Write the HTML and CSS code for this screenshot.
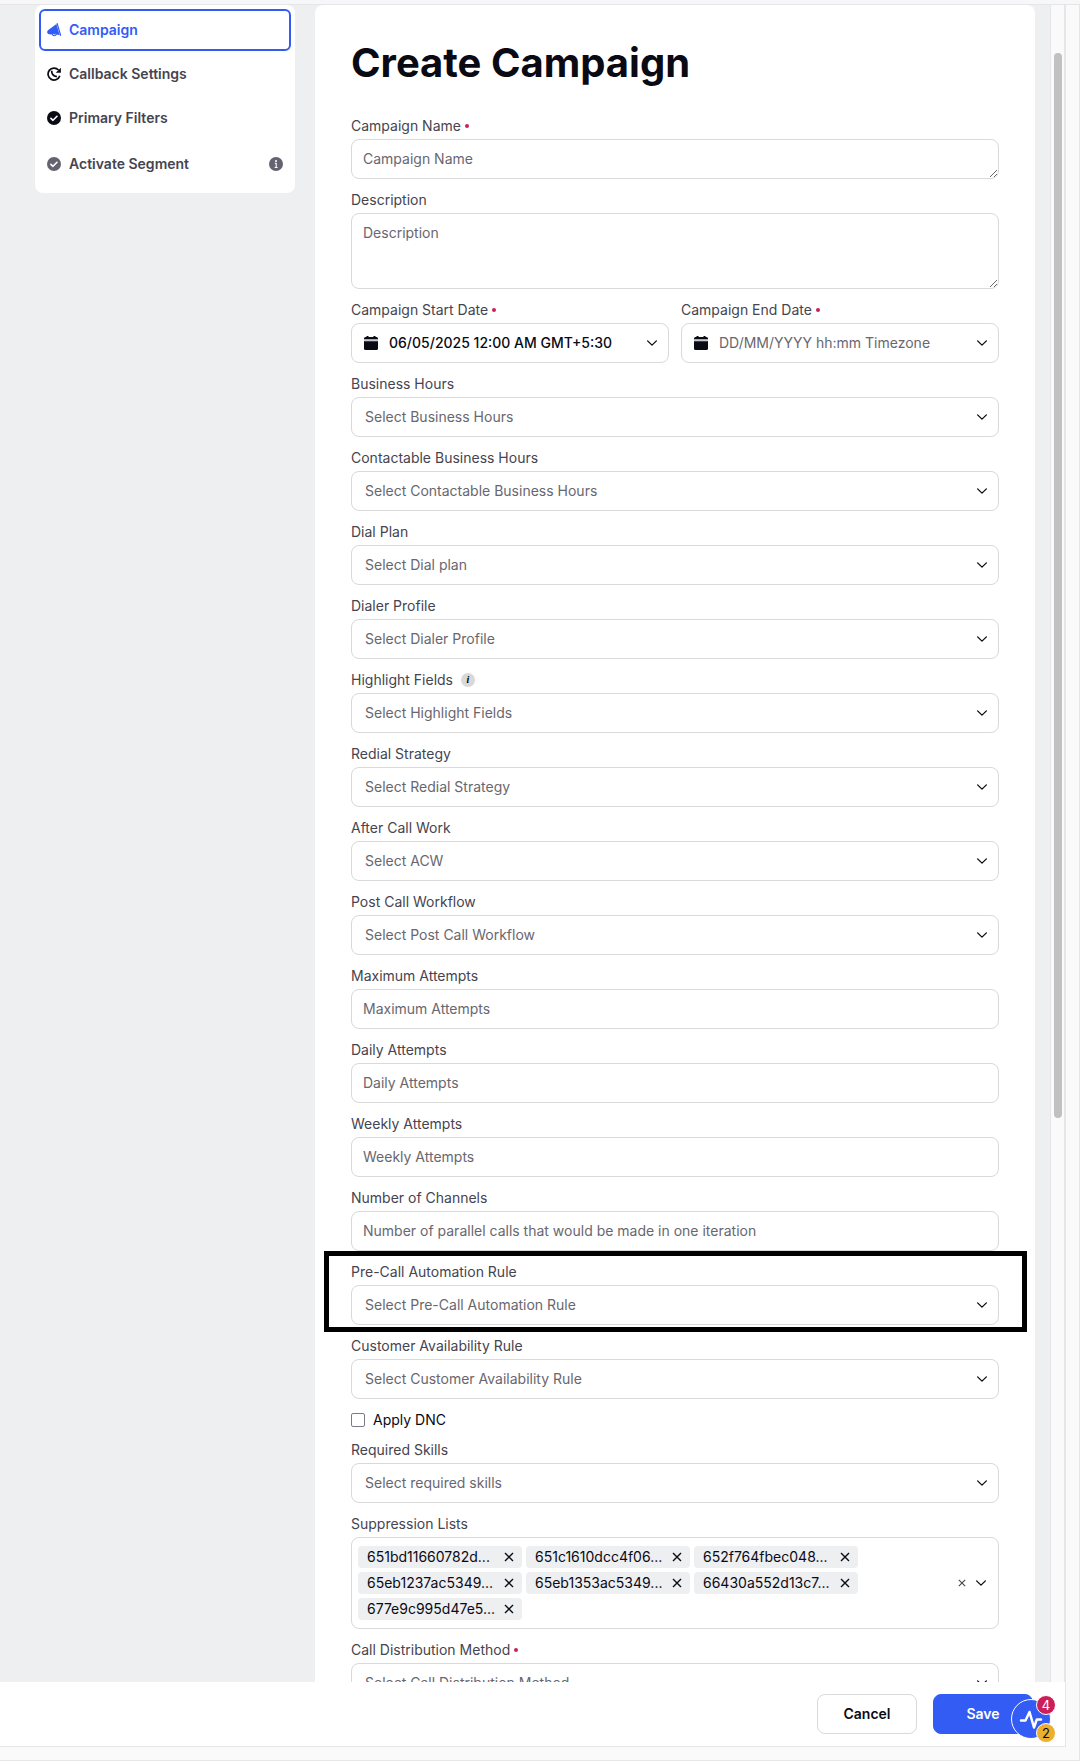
FILE: index.html
```html
<!DOCTYPE html>
<html lang="en">
<head>
<meta charset="utf-8">
<meta name="viewport" content="width=device-width, initial-scale=1">
<title>Create Campaign</title>
<link rel="stylesheet" href="styles.css">
</head>
<body>
<svg class="sprite" aria-hidden="true">
  <symbol id="chevron" viewBox="0 0 12 12"><path d="M1.600 3.900 6 8.100l4.400-4.200" fill="none" stroke="currentColor" stroke-width="1.300" stroke-linecap="round" stroke-linejoin="round"/></symbol>
  <symbol id="cross" viewBox="0 0 8 8"><path d="M.8.8l6.400 6.400M7.200.8.8 7.200" fill="none" stroke="currentColor" stroke-width="1.100"/></symbol>
  <symbol id="check" viewBox="0 0 14 14"><circle cx="7" cy="7" r="7" fill="currentColor"/><path d="M3.900 7.300l2.100 2 4-4" fill="none" stroke="#fff" stroke-width="1.600" stroke-linecap="round" stroke-linejoin="round"/></symbol>
  <symbol id="calendar" viewBox="0 0 14 14"><path d="M2.500 0h2v1h5V0h2v1h.9Q14 1 14 2.600V3.500H0V2.600Q0 1 1.600 1h.9z" fill="currentColor"/><path d="M0 3.500h14v2H0z" fill="#c9cbce"/><path d="M0 5.200h14v7.200q0 1.600-1.600 1.600H1.600Q0 14 0 12.400z" fill="currentColor"/></symbol>
</svg>
<header class="topbar"></header>
<div class="frame">
  <div class="app">
    <div class="workspace">
      <nav class="steps" aria-label="Campaign steps">
        <a class="step step-current" href="#campaign" aria-current="step">
          <svg class="icon" viewBox="0 0 14 14" aria-hidden="true"><path d="M9.400.9 12.700 12.300 9.900 11.500Q9.200 13.500 7 13.300 5.200 13 4.900 11.500L2 11.300Q.6 11 .2 9.500-.1 8 1.300 7z" fill="currentColor"/><path d="M10.200.6l3.400 11.800" fill="none" stroke="currentColor" stroke-width="1.200" stroke-linecap="round"/><path d="M6 11.100q1 1.300 2.500.2" fill="none" stroke="#fff" stroke-width=".8"/></svg>
          <span>Campaign</span>
        </a>
        <a class="step" href="#callback">
          <svg class="icon icon-dark" viewBox="0 0 14 14" aria-hidden="true"><path d="M11.500 3A6 6 0 1 0 12.800 8.800" fill="none" stroke="currentColor" stroke-width="1.700"/><path d="M13.900.7v5H8.700z" fill="currentColor"/><path d="M4.700 3.800Q4.400 8.800 9.900 9.700" fill="none" stroke="currentColor" stroke-width="1.700"/></svg>
          <span>Callback Settings</span>
        </a>
        <a class="step" href="#filters">
          <svg class="icon icon-dark" aria-hidden="true"><use href="#check"/></svg>
          <span>Primary Filters</span>
        </a>
        <a class="step step-last" href="#segment">
          <svg class="icon icon-muted" aria-hidden="true"><use href="#check"/></svg>
          <span>Activate Segment</span>
          <svg class="icon icon-muted step-info" viewBox="0 0 14 14" aria-hidden="true"><circle cx="7" cy="7" r="7" fill="currentColor"/><circle cx="7" cy="3.900" r="1" fill="#fff"/><path d="M5.800 6.200h1.400v4.200M5.600 10.500h3" fill="none" stroke="#fff" stroke-width="1.100"/></svg>
        </a>
      </nav>

      <main class="panel">
        <h1>Create Campaign</h1>
        <form class="form" id="campaign-form">
          <div class="field">
            <label class="required" for="name">Campaign Name</label>
            <textarea class="box" id="name" rows="1" placeholder="Campaign Name"></textarea>
          </div>
          <div class="field">
            <label for="description">Description</label>
            <textarea class="box box-tall" id="description" placeholder="Description"></textarea>
          </div>
          <div class="dates">
            <div class="field">
              <label class="required" for="start">Campaign Start Date</label>
              <div class="control">
                <input class="box box-date" id="start" type="text" value="06/05/2025 12:00 AM GMT+5:30">
                <svg class="calendar" aria-hidden="true"><use href="#calendar"/></svg>
                <svg class="chevron" aria-hidden="true"><use href="#chevron"/></svg>
              </div>
            </div>
            <div class="field">
              <label class="required" for="end">Campaign End Date</label>
              <div class="control">
                <input class="box box-date" id="end" type="text" placeholder="DD/MM/YYYY hh:mm Timezone">
                <svg class="calendar" aria-hidden="true"><use href="#calendar"/></svg>
                <svg class="chevron" aria-hidden="true"><use href="#chevron"/></svg>
              </div>
            </div>
          </div>
          <div class="field">
            <label for="hours">Business Hours</label>
            <div class="control">
              <select class="box box-select" id="hours"><option>Select Business Hours</option></select>
              <svg class="chevron" aria-hidden="true"><use href="#chevron"/></svg>
            </div>
          </div>
          <div class="field">
            <label for="contactable">Contactable Business Hours</label>
            <div class="control">
              <select class="box box-select" id="contactable"><option>Select Contactable Business Hours</option></select>
              <svg class="chevron" aria-hidden="true"><use href="#chevron"/></svg>
            </div>
          </div>
          <div class="field">
            <label for="dialplan">Dial Plan</label>
            <div class="control">
              <select class="box box-select" id="dialplan"><option>Select Dial plan</option></select>
              <svg class="chevron" aria-hidden="true"><use href="#chevron"/></svg>
            </div>
          </div>
          <div class="field">
            <label for="dialer">Dialer Profile</label>
            <div class="control">
              <select class="box box-select" id="dialer"><option>Select Dialer Profile</option></select>
              <svg class="chevron" aria-hidden="true"><use href="#chevron"/></svg>
            </div>
          </div>
          <div class="field">
            <label for="highlight">Highlight Fields <span class="hint">i</span></label>
            <div class="control">
              <select class="box box-select" id="highlight"><option>Select Highlight Fields</option></select>
              <svg class="chevron" aria-hidden="true"><use href="#chevron"/></svg>
            </div>
          </div>
          <div class="field">
            <label for="redial">Redial Strategy</label>
            <div class="control">
              <select class="box box-select" id="redial"><option>Select Redial Strategy</option></select>
              <svg class="chevron" aria-hidden="true"><use href="#chevron"/></svg>
            </div>
          </div>
          <div class="field">
            <label for="acw">After Call Work</label>
            <div class="control">
              <select class="box box-select" id="acw"><option>Select ACW</option></select>
              <svg class="chevron" aria-hidden="true"><use href="#chevron"/></svg>
            </div>
          </div>
          <div class="field">
            <label for="workflow">Post Call Workflow</label>
            <div class="control">
              <select class="box box-select" id="workflow"><option>Select Post Call Workflow</option></select>
              <svg class="chevron" aria-hidden="true"><use href="#chevron"/></svg>
            </div>
          </div>
          <div class="field">
            <label for="maximum">Maximum Attempts</label>
            <input class="box" id="maximum" type="text" placeholder="Maximum Attempts">
          </div>
          <div class="field">
            <label for="daily">Daily Attempts</label>
            <input class="box" id="daily" type="text" placeholder="Daily Attempts">
          </div>
          <div class="field">
            <label for="weekly">Weekly Attempts</label>
            <input class="box" id="weekly" type="text" placeholder="Weekly Attempts">
          </div>
          <div class="field">
            <label for="channels">Number of Channels</label>
            <input class="box" id="channels" type="text" placeholder="Number of parallel calls that would be made in one iteration">
          </div>
          <div class="field field-marked">
            <label for="precall">Pre-Call Automation Rule</label>
            <div class="control">
              <select class="box box-select" id="precall"><option>Select Pre-Call Automation Rule</option></select>
              <svg class="chevron" aria-hidden="true"><use href="#chevron"/></svg>
            </div>
          </div>
          <div class="field">
            <label for="availability">Customer Availability Rule</label>
            <div class="control">
              <select class="box box-select" id="availability"><option>Select Customer Availability Rule</option></select>
              <svg class="chevron" aria-hidden="true"><use href="#chevron"/></svg>
            </div>
          </div>
          <label class="check" for="dnc"><input id="dnc" type="checkbox">Apply DNC</label>
          <div class="field">
            <label for="skills">Required Skills</label>
            <div class="control">
              <select class="box box-select" id="skills"><option>Select required skills</option></select>
              <svg class="chevron" aria-hidden="true"><use href="#chevron"/></svg>
            </div>
          </div>
          <div class="field">
            <span class="label" id="suppression">Suppression Lists</span>
            <div class="multi" role="group" aria-labelledby="suppression">
              <ul class="chips">
                <li><span>651bd11660782d...</span><button type="button" aria-label="Remove"><svg aria-hidden="true"><use href="#cross"/></svg></button></li>
                <li><span>651c1610dcc4f06...</span><button type="button" aria-label="Remove"><svg aria-hidden="true"><use href="#cross"/></svg></button></li>
                <li><span>652f764fbec048...</span><button type="button" aria-label="Remove"><svg aria-hidden="true"><use href="#cross"/></svg></button></li>
                <li><span>65eb1237ac5349...</span><button type="button" aria-label="Remove"><svg aria-hidden="true"><use href="#cross"/></svg></button></li>
                <li><span>65eb1353ac5349...</span><button type="button" aria-label="Remove"><svg aria-hidden="true"><use href="#cross"/></svg></button></li>
                <li><span>66430a552d13c7...</span><button type="button" aria-label="Remove"><svg aria-hidden="true"><use href="#cross"/></svg></button></li>
                <li><span>677e9c995d47e5...</span><button type="button" aria-label="Remove"><svg aria-hidden="true"><use href="#cross"/></svg></button></li>
              </ul>
              <button class="clear" type="button" aria-label="Clear all"><svg aria-hidden="true"><use href="#cross"/></svg></button>
              <button class="open" type="button" aria-label="Open list"><svg aria-hidden="true"><use href="#chevron"/></svg></button>
            </div>
          </div>
          <div class="field">
            <label class="required" for="distribution">Call Distribution Method</label>
            <div class="control">
              <select class="box box-select" id="distribution"><option>Select Call Distribution Method</option></select>
              <svg class="chevron" aria-hidden="true"><use href="#chevron"/></svg>
            </div>
          </div>
        </form>
      </main>
      <div class="track"><div class="thumb"></div></div>
    </div>

    <footer class="actions">
      <button class="btn" type="button">Cancel</button>
      <button class="btn btn-primary" type="submit" form="campaign-form">Save</button>
      <div class="widget">
        <button class="widget-button" type="button" aria-label="Activity">
          <svg viewBox="0 0 24 24" aria-hidden="true"><path d="M2 13.500H6.500L10.500 5 15 20.500 17.800 12.500H22" fill="none" stroke="#fff" stroke-width="2.500" stroke-linecap="round" stroke-linejoin="round"/></svg>
        </button>
        <span class="badge badge-red">4</span>
        <span class="badge badge-amber">2</span>
      </div>
    </footer>
  </div>
</div>
</body>
</html>
```
FILE: styles.css
```css
:root {
  --ink: #0a0a14;
  --label: #454450;
  --muted: #68676f;
  --line: #d9d9d9;
  --rule: #e6e6e8;
  --canvas: #eeeff1;
  --blue: #335cf5;
  --red: #cb1f5a;
}

* { box-sizing: border-box; }

body {
  display: flex;
  flex-direction: column;
  height: 100vh;
  margin: 0;
  background: #fafafa;
  color: var(--ink);
  font-family: Inter, "Liberation Sans", sans-serif;
  font-size: 14px;
  line-height: 18px;
}

button, input, select, textarea { font: inherit; color: inherit; }

.sprite { display: none; }

.topbar {
  flex: none;
  height: 5px;
  background: #f7f7fa;
  border-bottom: 1px solid var(--rule);
}

.frame {
  display: flex;
  flex: 1;
  min-height: 0;
  padding: 0 13px 13px 0;
  border: solid var(--rule);
  border-width: 0 1px 1px 0;
}

.app {
  display: flex;
  flex: 1;
  flex-direction: column;
  min-width: 0;
  border: solid var(--rule);
  border-width: 0 1px 1px 0;
}

.workspace {
  display: flex;
  flex: 1;
  align-items: flex-start;
  min-height: 0;
  padding-left: 35px;
  overflow: hidden;
  background: var(--canvas);
}

/* Step list */
.steps {
  display: flex;
  flex: none;
  flex-direction: column;
  gap: 2px;
  width: 260px;
  padding: 4px 4px 6px;
  border-radius: 8px;
  background: #fff;
}

.step {
  display: flex;
  align-items: center;
  gap: 8px;
  height: 42px;
  padding: 0 6px;
  border: 2px solid transparent;
  border-radius: 6px;
  color: var(--label);
  font-weight: 600;
  text-decoration: none;
}

.step-current { border-color: var(--blue); color: var(--blue); }
.step-last { height: 46px; }
.step-info { margin-left: auto; }

.icon { flex: none; width: 14px; height: 14px; }
.icon-dark { color: var(--ink); }
.icon-muted { color: #656370; }

/* Form panel */
.panel {
  flex: 1;
  min-width: 0;
  height: 100%;
  margin: 0 15px 0 20px;
  padding: 32px 36px;
  border-radius: 8px 8px 0 0;
  overflow-y: auto;
  scrollbar-width: none;
  background: #fff;
}

h1 {
  margin: 0 0 28px;
  font-size: 40px;
  font-weight: 700;
  line-height: 52px;
}

.form { display: flex; flex-direction: column; gap: 12px; }

.field {
  display: flex;
  flex-direction: column;
  gap: 4px;
  min-width: 0;
}

.field > label, .label {
  display: flex;
  align-items: center;
  height: 18px;
  color: var(--label);
}

.required::after {
  width: 4px;
  height: 4px;
  margin-left: 4px;
  border-radius: 50%;
  background: var(--red);
  content: "";
}

.hint {
  width: 14px;
  height: 14px;
  margin-left: 8px;
  border-radius: 50%;
  background: var(--line);
  color: #000;
  font: italic bold 10px/14px "Liberation Serif", serif;
  text-align: center;
}

.dates { display: grid; grid-template-columns: 1fr 1fr; gap: 12px; }

.control { display: grid; align-items: center; }
.control > * { grid-area: 1 / 1; }

.box {
  display: block;
  width: 100%;
  height: 40px;
  margin: 0;
  padding: 9px 11px 11px;
  border: 1px solid var(--line);
  border-radius: 8px;
  background: #fff;
}

.box::placeholder { color: var(--muted); opacity: 1; }
textarea.box { padding: 10px 11px; resize: vertical; overflow: hidden; }
textarea.box-tall { height: 76px; }

.box-select {
  padding: 0 32px 0 13px;
  appearance: none;
  color: var(--muted);
}

.box-date { padding: 9px 32px 11px 37px; font-weight: 500; }
.box-date::placeholder { font-weight: 400; }

.calendar {
  width: 14px;
  height: 14px;
  margin-left: 13px;
  pointer-events: none;
}

.chevron {
  justify-self: end;
  width: 12px;
  height: 12px;
  margin-right: 11px;
  pointer-events: none;
}

/* Thick frame that calls attention to one field */
.field-marked { position: relative; }
.field-marked::after {
  position: absolute;
  inset: -12px -28px -7px -27px;
  border: 5px solid #000;
  pointer-events: none;
  content: "";
}

.check { display: flex; align-items: center; gap: 8px; }
.check input {
  width: 14px;
  height: 14px;
  margin: 0;
  border: 1px solid #7b7986;
  border-radius: 2px;
  appearance: none;
  background: #fff;
}
.check input:checked { background: var(--blue); }

.multi {
  display: flex;
  align-items: center;
  padding: 8px 11px 8px 6px;
  border: 1px solid var(--line);
  border-radius: 8px;
}

.multi button {
  display: flex;
  padding: 0;
  border: 0;
  background: none;
}
.multi svg { width: 8px; height: 8px; }

.chips {
  display: flex;
  flex: 1;
  flex-wrap: wrap;
  gap: 4px;
  margin: 0;
  padding: 0;
  list-style: none;
}

.chips li {
  display: flex;
  align-items: center;
  justify-content: space-between;
  width: 164px;
  height: 22px;
  padding: 0 8px 0 9px;
  border-radius: 4px;
  background: var(--canvas);
}

.chips svg { width: 10px; height: 10px; }

.clear { color: var(--label); }
.multi .open { margin-left: 9px; }
.multi .open svg { width: 12px; height: 12px; }

/* Scroll indicator */
.track {
  flex: none;
  align-self: stretch;
  width: 15px;
  padding: 48px 2px 0 3px;
  border: solid var(--rule);
  border-width: 0 1px;
  background: #fafafa;
}

.thumb {
  width: 8px;
  height: 65.4%;
  border-radius: 4px;
  background: #c1c1c1;
}

/* Footer */
.actions {
  position: relative;
  display: flex;
  flex: none;
  align-items: center;
  justify-content: flex-end;
  gap: 16px;
  height: 64px;
  padding: 0 32px;
  background: #fff;
}

.btn {
  width: 100px;
  height: 40px;
  padding: 0;
  border: 1px solid var(--line);
  border-radius: 8px;
  background: #fff;
  font-weight: 600;
}

.btn-primary { border-color: var(--blue); background: var(--blue); color: #fff; }

.widget {
  position: absolute;
  top: 13px;
  right: 9px;
  width: 45px;
  height: 48px;
}

.widget-button {
  position: absolute;
  top: 4px;
  left: 0;
  display: flex;
  align-items: center;
  justify-content: center;
  width: 40px;
  height: 40px;
  padding: 0;
  border: 1px solid #fff;
  border-radius: 50%;
  background: var(--blue);
}
.widget-button svg { flex: none; width: 24px; height: 24px; }

.badge {
  position: absolute;
  right: 0;
  width: 20px;
  height: 20px;
  border: 1px solid #fff;
  border-radius: 50%;
  font-size: 13px;
  text-align: center;
}
.badge-red { top: 0; background: var(--red); color: #fff; }
.badge-amber { bottom: 0; background: #ebae2d; }
```
